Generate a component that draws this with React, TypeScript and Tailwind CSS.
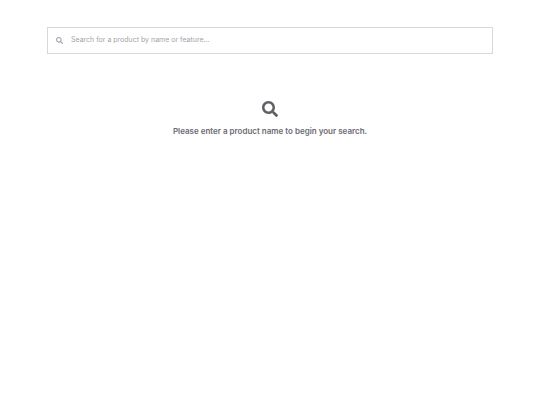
import { FaSearch } from 'react-icons/fa';

export default function App() {
  return (
    <div className="min-h-screen bg-white px-[47px] pt-[27px]" style={{ fontFamily: 'Inter, sans-serif' }}>
      <div className="flex h-[27px] w-[446px] items-center gap-[8px] border border-[#d8d8dc] px-[8px]">
        <FaSearch className="h-[7px] w-[7px] text-[#9ca3af]" />
        <span className="text-[7px] text-[#a3a3ab]">Search for a product by name or feature...</span>
      </div>
      <div className="mt-[47px] flex w-[446px] flex-col items-center">
        <FaSearch className="h-[16px] w-[16px] text-[#606068]" />
        <p className="mt-[8px] text-[8px] font-semibold text-[#6b6b73]">Please enter a product name to begin your search.</p>
      </div>
    </div>
  );
}
